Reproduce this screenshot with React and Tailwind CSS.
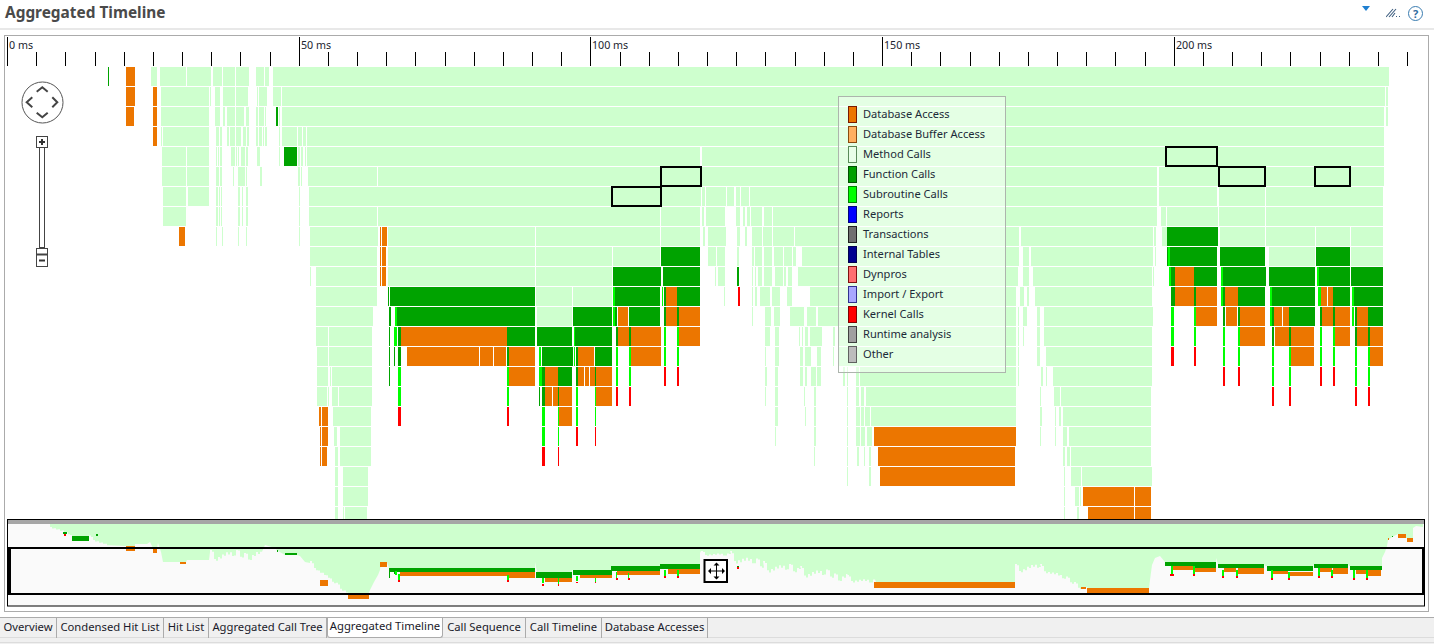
const COLORS = { l: "#ceffce", f: "#00a300", s: "#00ff00", o: "#ec7600", r: "#ff0000", b: "#ffb060" };

// one string per chart row, colour letter followed by x ranges in page pixels
const ROWS = [
  "f 108-109 o 126-135 l 151-153 153-157 160-186 187-211 213-222 223-235 236-249 256-258 258-264 265-269 273-1389",
  "o 126-135 153-157 l 161-209 210-211 215-220 223-235 236-248 257-258 259-263 263-267 273-281 282-1385 1386-1388",
  "o 126-134 153-157 l 161-209 215-220 223-225 227-235 236-244 246-249 256-258 259-264 265-266 f 276-278 l 279-280 282-1384 1386-1388",
  "o 153-157 l 161-162 163-209 216-219 220-222 227-229 230-235 236-241 243-246 247-249 256-258 259-262 263-264 265-267 279-280 282-297 298-302 303-306 307-1384",
  "l 162-186 187-209 216-217 218-219 220-222 231-235 236-237 238-239 241-245 246-248 257-260 279-280 f 284-297 l 298-300 301-303 305-306 307-700 702-1384",
  "l 162-186 187-209 216-219 220-222 233-234 238-243 243-245 246-247 260-262 298-300 301-302 308-377 378-700 702-1157 1159-1384",
  "l 163-186 188-209 216-218 219-220 221-222 238-240 242-243 246-248 299-300 309-701 702-705 706-726 727-734 736-740 741-749 750-1157 1159-1217 1219-1265 1266-1383",
  "l 163-186 216-218 219-220 221-222 238-240 242-243 246-248 299-300 309-377 378-660 661-700 702-704 706-725 736-740 743-745 747-750 751-762 764-772 773-1157 1161-1166 1167-1218 1219-1265 1266-1383",
  "o 179-185 l 216-217 222-223 238-239 246-247 299-300 310-378 o 380-381 382-387 l 388-535 536-660 661-700 703-705 708-726 737-740 745-747 752-762 763-772 773-794 795-1019 1021-1153 1154-1156 1162-1167 f 1167-1218 l 1220-1265 1266-1315 1316-1350 1351-1383",
  "l 310-377 o 380-381 382-386 l 388-535 536-612 613-660 f 661-700 l 708-716 717-725 737-739 752-754 755-762 764-772 774-783 784-792 793-796 802-1019 1023-1029 1031-1153 1155-1156 f 1167-1168 s 1168-1170 f 1170-1217 1220-1265 l 1269-1315 f 1316-1350 l 1351-1383",
  "l 310-311 316-377 o 380-381 382-386 l 388-535 536-612 f 613-661 663-700 l 715-716 718-725 f 737-739 l 752-753 755-756 758-762 764-772 775-783 784-786 788-792 798-1018 1023-1029 1033-1152 1153-1154 s 1169-1171 f 1171-1175 o 1175-1194 f 1194-1217 s 1221-1223 f 1223-1266 1269-1315 s 1317-1319 f 1319-1350 1351-1383",
  "l 316-377 f 388-389 390-535 l 536-572 573-612 s 613-615 f 615-660 s 662-663 f 664-666 o 666-677 f 677-700 l 724-725 r 738-740 l 752-753 755-757 760-770 772-780 787-792 810-1016 1020-1024 1027-1029 1035-1152 f 1171-1175 o 1175-1194 f 1194-1196 o 1196-1217 s 1221-1223 f 1223-1225 o 1225-1238 f 1238-1265 s 1270-1272 f 1272-1315 s 1318-1321 o 1321-1327 1328-1333 f 1333-1350 s 1352-1354 f 1354-1383",
  "l 316-373 f 389-391 s 395-397 f 397-535 l 537-572 f 573-612 s 613-615 f 615-617 o 618-628 f 629-660 664-666 o 666-677 f 677-679 o 679-700 l 752-753 765-771 774-780 790-804 807-816 818-1016 1018-1019 1023-1027 1037-1040 1044-1153 s 1171-1174 1194-1196 o 1196-1217 f 1223-1225 o 1226-1237 f 1238-1240 o 1240-1265 s 1270-1272 f 1272-1274 o 1274-1282 1283-1289 f 1289-1315 1320-1322 o 1322-1333 f 1333-1335 o 1335-1350 s 1352-1354 f 1355-1357 o 1357-1368 f 1368-1383",
  "l 316-328 329-372 f 389-390 s 394-397 f 398-401 o 401-507 f 507-535 537-572 s 574-575 f 575-612 616-618 o 618-629 f 629-631 o 631-661 s 664-666 677-679 o 679-700 l 765-770 775-779 799-800 802-803 805-808 810-822 833-835 839-1016 1018-1019 1023-1024 1037-1040 1044-1152 s 1171-1174 1194-1196 1223-1225 1238-1240 o 1240-1265 f 1272-1274 o 1275-1289 f 1289-1291 o 1291-1314 s 1320-1322 1333-1335 o 1335-1350 f 1355-1357 o 1357-1368 f 1368-1370 o 1370-1383",
  "l 317-328 329-372 f 389-390 394-395 398-401 o 407-479 480-493 494-506 f 507-509 o 509-535 s 539-541 f 542-573 s 574-575 f 576-578 o 578-594 f 595-612 s 616-618 629-631 o 631-661 s 664-666 677-679 l 765-766 775-779 800-803 805-807 807-811 817-821 833-834 838-1016 1018-1019 1037-1040 1046-1152 r 1171-1174 1194-1196 s 1223-1225 1238-1240 1272-1274 1289-1291 o 1291-1314 s 1320-1322 1333-1335 1355-1357 1368-1370 o 1370-1383",
  "l 317-328 330-331 332-372 f 389-390 s 398-401 507-509 o 509-535 s 539-542 f 542-545 o 545-558 f 558-572 576-578 o 578-584 585-589 590-595 f 595-596 o 596-612 s 616-618 629-631 r 664-666 677-679 l 765-767 775-778 800-803 805-807 811-816 817-821 843-845 847-848 856-859 860-1016 1018-1019 1041-1043 1046-1047 1053-1152 r 1223-1225 1238-1240 s 1272-1274 1289-1291 r 1320-1322 1333-1335 s 1355-1357 1368-1370",
  "l 317-327 328-329 332-338 339-372 s 398-401 507-509 f 539-540 542-545 o 545-552 553-558 f 558-559 o 559-572 s 576-578 595-596 o 596-612 r 616-618 629-631 l 765-766 775-778 804-805 814-816 847-848 856-859 861-864 866-1016 1040-1041 1054-1060 1061-1151 r 1272-1274 1289-1291 1355-1357 1368-1370",
  "o 319-321 322-328 l 333-371 r 398-401 507-509 s 542-545 558-559 o 559-572 s 576-578 595-596 l 775-778 805-806 814-816 847-848 856-860 861-864 865-870 871-1016 1040-1042 1055-1056 1059-1061 1063-1151",
  "o 320-321 322-328 l 334-337 340-371 s 542-545 558-559 r 576-578 595-596 l 775-776 814-816 847-848 856-860 861-865 867-872 o 874-1016 l 1040-1041 1055-1056 1063-1067 1069-1151",
  "o 320-321 322-327 l 335-338 340-371 r 542-545 558-559 l 814-815 847-848 857-859 864-865 869-871 o 878-1015 l 1063-1065 1067-1070 1071-1151",
  "l 335-338 343-368 847-848 869-871 o 880-1015 l 1064-1065 1071-1081 1082-1152",
  "l 335-338 343-368 1064-1065 1075-1079 1080-1081 o 1083-1134 1135-1151",
  "l 335-338 343-344 345-367 1064-1065 1077-1079 o 1088-1134 1135-1151",
];

const parseRow = (row) => {
  let color = "l";
  const out = [];
  row.split(" ").forEach((part) => {
    if (part.includes("-")) {
      const [a, b] = part.split("-").map(Number);
      out.push({ a, b, color });
    } else {
      color = part;
    }
  });
  return out;
};

const FRAMES = [
  [612, 187, 49, 19],
  [661, 167, 40, 19],
  [1166, 147, 51, 19],
  [1219, 167, 46, 19],
  [1315, 167, 35, 19],
];

const LEGEND = [
  ["Database Access", "bg-[#ec7600]", "border-[#7a1a00]"],
  ["Database Buffer Access", "bg-[#ffb060]", "border-[#8a4a10]"],
  ["Method Calls", "bg-[#e8ffe8]", "border-[#5a8a5a]"],
  ["Function Calls", "bg-[#00a000]", "border-[#005000]"],
  ["Subroutine Calls", "bg-[#00ff00]", "border-[#008000]"],
  ["Reports", "bg-[#0000ff]", "border-[#000080]"],
  ["Transactions", "bg-[#707070]", "border-[#202020]"],
  ["Internal Tables", "bg-[#000090]", "border-[#000050]"],
  ["Dynpros", "bg-[#ff7070]", "border-[#801010]"],
  ["Import / Export", "bg-[#a8a8ff]", "border-[#303090]"],
  ["Kernel Calls", "bg-[#ff0000]", "border-[#800000]"],
  ["Runtime analysis", "bg-[#a0a0a0]", "border-[#404040]"],
  ["Other", "bg-[#bcbcbc]", "border-[#606060]"],
];

const TABS = [
  ["Overview", "w-[57px]"],
  ["Condensed Hit List", "w-[107px]"],
  ["Hit List", "w-[45px]"],
  ["Aggregated Call Tree", "w-[118px]"],
  ["Aggregated Timeline", "w-[116px]", true],
  ["Call Sequence", "w-[83px]"],
  ["Call Timeline", "w-[76px]"],
  ["Database Accesses", "w-[106px]"],
];

const TICKS = Array.from({ length: 49 }, (_, i) => ({
  x: Math.round(7 + 29.17 * i),
  major: i % 10 === 0,
  label: i % 10 === 0 ? `${i * 5} ms` : null,
}));

// bottom edge of the green area in the overview strip
const jag = (from, to, amp) => {
  const pts = [];
  for (let x = from[0], i = 0; x < to[0]; x += 2, i++) {
    const t = (x - from[0]) / (to[0] - from[0]);
    const y = from[1] + (to[1] - from[1]) * t;
    const n = (((i * i * 13 + i * 5) % 17) - 8) / 8 + Math.sin(i * 0.45) * 0.5;
    pts.push([x, y + n * amp], [x + 2, y + n * amp]);
  }
  return pts;
};

const CONTOUR = [
  ...jag([46, 524], [72, 536], 1.5),
  [72, 541], [89, 541], [89, 537],
  ...jag([89, 537], [108, 546], 1.5),
  [125, 546], [135, 546], [135, 544], [147, 544], [150, 542], [153, 548], [157, 548], [158, 543], [161, 552], [163, 562],
  [186, 562], [187, 560], [209, 560], [210, 552],
  ...jag([210, 555], [262, 556], 5),
  [265, 545], [275, 548], [278, 551], [285, 555], [297, 555], [300, 556], [305, 562], [310, 563],
  ...jag([310, 563], [348, 595], 2),
  [348, 595], [368, 595], [370, 590], [374, 582], [378, 575], [380, 570], [381, 562], [387, 562], [389, 568],
  [535, 568], [535, 562], [537, 572], [572, 572], [572, 570], [611, 570], [611, 566], [660, 566], [660, 564], [700, 564], [700, 553],
  ...jag([701, 553], [730, 556], 2),
  ...jag([730, 556], [763, 566], 5),
  ...jag([763, 566], [800, 571], 5),
  ...jag([800, 571], [847, 578], 5),
  ...jag([847, 578], [874, 583], 3),
  [876, 582], [1015, 582],
  ...jag([1015, 568], [1040, 567], 4),
  ...jag([1040, 567], [1087, 590], 3),
  [1087, 588], [1149, 588], [1150, 580], [1152, 565], [1155, 558], [1160, 556], [1165, 562],
  [1216, 562], [1216, 558], [1218, 564], [1264, 564], [1265, 566], [1313, 566], [1314, 564], [1348, 564], [1349, 566],
  [1382, 566], [1382, 558], [1385, 552], [1387, 546], [1388, 540], [1392, 537], [1398, 534], [1406, 534], [1406, 538], [1413, 538], [1413, 528], [1416, 526], [1423, 527], [1423, 524],
];

// x0, x1, y0, y1, colour
const OVERVIEW_BARS = [
  [72, 89, 536, 541, "f"], [63, 67, 532, 534, "f"], [64, 66, 534, 536, "r"], [96, 98, 534, 536, "f"],
  [126, 135, 546, 551, "o"], [153, 157, 548, 553, "o"], [180, 186, 562, 564, "o"], [277, 278, 550, 552, "f"], [285, 297, 553, 555, "f"],
  [320, 328, 580, 586, "o"], [348, 369, 595, 599, "o"], [380, 387, 562, 567, "o"],
  [389, 535, 568, 572, "f"], [400, 507, 572, 576, "o"], [507, 535, 572, 578, "o"], [389, 390, 572, 578, "f"], [394, 396, 572, 574, "f"], [395, 397, 571, 575, "s"], [398, 400, 574, 580, "s"], [398, 400, 580, 582, "r"],
  [536, 572, 572, 578, "f"], [545, 572, 578, 582, "o"], [573, 612, 570, 575, "f"], [580, 612, 575, 578, "o"],
  [611, 660, 566, 571, "f"], [617, 660, 571, 575, "o"], [660, 700, 564, 569, "f"], [668, 700, 569, 574, "o"],
  [507, 509, 575, 580, "s"], [507, 509, 580, 582, "r"], [542, 544, 578, 583, "s"], [542, 544, 584, 586, "r"], [558, 559, 578, 584, "s"], [558, 559, 584, 586, "r"],
  [576, 578, 576, 581, "s"], [576, 578, 582, 583, "r"], [595, 596, 578, 582, "s"], [595, 596, 582, 583, "r"], [616, 617, 572, 578, "s"], [616, 618, 578, 580, "r"], [628, 629, 573, 578, "s"], [628, 630, 578, 580, "r"],
  [664, 666, 570, 576, "s"], [664, 666, 576, 578, "r"], [677, 679, 570, 576, "s"], [677, 679, 576, 578, "r"], [737, 739, 566, 567, "f"], [737, 739, 567, 569, "r"],
  [874, 1015, 582, 588, "o"], [1087, 1149, 588, 593, "o"], [1081, 1086, 587, 589, "o"],
  [1165, 1216, 562, 566, "f"], [1173, 1195, 566, 570, "o"], [1195, 1216, 568, 572, "o"], [1195, 1216, 566, 568, "f"],
  [1218, 1264, 564, 568, "f"], [1224, 1236, 568, 572, "o"], [1238, 1264, 568, 574, "o"],
  [1267, 1313, 566, 571, "f"], [1273, 1288, 571, 574, "o"], [1289, 1313, 572, 576, "o"],
  [1314, 1348, 564, 568, "f"], [1320, 1332, 568, 572, "o"], [1333, 1348, 568, 574, "o"],
  [1350, 1382, 566, 570, "f"], [1356, 1367, 570, 574, "o"], [1368, 1381, 570, 576, "o"],
  [1171, 1173, 566, 574, "s"], [1170, 1174, 574, 576, "r"], [1193, 1195, 566, 574, "s"], [1193, 1195, 574, 576, "r"],
  [1222, 1224, 570, 576, "s"], [1222, 1224, 576, 578, "r"], [1236, 1238, 570, 576, "s"], [1236, 1238, 576, 578, "r"],
  [1271, 1273, 570, 578, "s"], [1271, 1273, 578, 580, "r"], [1288, 1290, 572, 578, "s"], [1288, 1290, 578, 580, "r"],
  [1318, 1320, 568, 576, "s"], [1318, 1320, 576, 578, "r"], [1331, 1333, 570, 576, "s"], [1331, 1333, 576, 578, "r"],
  [1353, 1355, 570, 578, "s"], [1353, 1355, 578, 580, "r"], [1366, 1368, 570, 578, "s"], [1366, 1368, 578, 580, "r"],
  [1398, 1406, 534, 538, "o"], [1407, 1413, 538, 542, "o"], [1388, 1389, 538, 540, "o"], [1392, 1393, 536, 537, "f"],
];

const Chart = () => (
  <svg width="1423" height="483" viewBox="5 36 1423 483" className="block">
    <rect x="5" y="36" width="1423" height="483" fill="#ffffff" />
    {TICKS.map((t) => (
      <g key={t.x}>
        <line x1={t.x + 0.5} x2={t.x + 0.5} y1={t.major ? 37 : 52} y2="66" stroke="#000" />
        {t.label && (
          <text x={t.x + 2} y="49" fontSize="10.7" fill="#1c2430" fontFamily="'Noto Sans', sans-serif">
            {t.label}
          </text>
        )}
      </g>
    ))}
    {ROWS.map((row, i) =>
      parseRow(row).map((s) => (
        <rect key={`${i}-${s.a}`} x={s.a} y={67 + i * 20} width={s.b - s.a} height="19" fill={COLORS[s.color]} />
      ))
    )}
    {FRAMES.map(([x, y, w, h]) => (
      <rect key={x} x={x} y={y} width={w} height={h} fill="none" stroke="#000" strokeWidth="2" />
    ))}
  </svg>
);

const Overview = () => (
  <svg width="1418" height="88" viewBox="7 519 1418 88" className="block ml-[2px]">
    <rect x="7.5" y="519.5" width="1417" height="86.5" fill="#fafafa" stroke="#000" />
    <polygon points={CONTOUR.map((p) => p.join(",")).join(" ")} fill={COLORS.l} />
    {OVERVIEW_BARS.map(([a, b, y0, y1, c]) => (
      <rect key={`${a}-${y0}-${c}`} x={a} y={y0} width={b - a} height={y1 - y0} fill={COLORS[c]} />
    ))}
    <rect x="8" y="520" width="1416" height="4" fill="#a6a6a6" />
    <rect x="9.5" y="548" width="1413.5" height="46" fill="none" stroke="#000" strokeWidth="2" />
    <rect x="8" y="547" width="3" height="48" fill="#000" />
    <rect x="704.5" y="560" width="22.5" height="22" fill="#fff" stroke="#000" strokeWidth="2" />
    <path d="M716.5 564v14M709.5 571h14" stroke="#000" strokeWidth="1" fill="none" />
    <path d="M716.5 562.5l-3 3h6zM716.5 579.5l-3-3h6zM708 571l3-3v6zM725 571l-3-3v6z" fill="#000" />
  </svg>
);

// pan circle and zoom slider sitting on top of the chart
const NavControl = () => (
  <svg width="46" height="192" viewBox="0 0 46 192" className="absolute left-[15px] top-[44px]">
    <circle cx="22.5" cy="22.5" r="20.5" fill="#fff" stroke="#555" strokeWidth="1" />
    <path d="M16.7 11.7l5.6-4.4 5.4 4.4M16.7 32.7l5.6 4.6 5.4-4.6M12.3 17.3l-5.6 5 5.6 5M32.3 17.3l5 5-5 5" fill="none" stroke="#444" strokeWidth="2" />
    <rect x="16.5" y="56.5" width="11" height="11" fill="#fff" stroke="#444" />
    <path d="M19 62h6M22 59v6" stroke="#333" strokeWidth="2" />
    <rect x="19.5" y="67.5" width="5" height="100" fill="#fff" stroke="#444" />
    <rect x="16.5" y="168.5" width="11" height="18" fill="#fff" stroke="#444" />
    <path d="M17 174.5h10" stroke="#444" strokeWidth="2" />
    <path d="M19 180.5h6" stroke="#333" strokeWidth="2" />
  </svg>
);

const Legend = () => (
  <div className="absolute left-[833px] top-[60px] w-[168px] h-[277px] border border-[#adb5ad] bg-white/45 pl-[9px] pt-[7px] flex flex-col">
    {LEGEND.map(([label, bg, border]) => (
      <div key={label} className="flex items-center h-[20px] shrink-0">
        <span className={`w-[9px] h-[17px] border ${bg} ${border}`}></span>
        <span className="ml-[6px] text-[11.1px] text-[#1c2a38] leading-none">{label}</span>
      </div>
    ))}
  </div>
);

const App = () => {
  return (
    <div className="w-[1434px] h-[644px] bg-white overflow-hidden flex flex-col font-['Noto_Sans',sans-serif]">
      {/* Header */}
      <div className="h-[30px] shrink-0 border-b-2 border-[#e8e8e8] flex items-center pl-[5px] pr-[11px]">
        <h1 className="text-[15.4px] font-bold text-[#4a4a4a] leading-none pb-[3px]">Aggregated Timeline</h1>
        <div className="ml-auto flex items-center pb-[2px]">
          <svg width="10" height="6" viewBox="0 0 10 6" className="mb-[8px]">
            <path d="M1 0h8L5 5z" fill="#1f7fd0" />
          </svg>
          <svg width="16" height="10" viewBox="0 0 16 10" className="ml-[15px]">
            <path d="M0 9l7-8M3 9l7-8M6 9l3-4" stroke="#3f5f80" strokeWidth="1.1" fill="none" />
            <path d="M10 8.5h1M13 8.5h1" stroke="#3f5f80" strokeWidth="1" />
          </svg>
          <span className="ml-[6px] w-[15px] h-[15px] rounded-full border-[1.5px] border-[#3a7cb0] text-[#2f6c9f] text-[11px] font-bold leading-none flex items-center justify-center">?</span>
        </div>
      </div>

      {/* Timeline panel */}
      <div className="mt-[5px] ml-[4px] w-[1425px] h-[577px] shrink-0 border border-[#ababab]">
        <div className="relative">
          <Chart />
          <NavControl />
          <Legend />
        </div>
        <Overview />
      </div>

      {/* Tabs */}
      <div className="mt-[5px] h-[21px] shrink-0 bg-[#f0f0f0] border-t border-[#ababab] border-b border-b-[#dcdcdc] flex">
        {TABS.map(([label, width, active]) => (
          <div
            key={label}
            className={`${width} h-[20px] shrink-0 flex items-center justify-center pb-[2px] text-[11.25px] text-[#1a1a2a] whitespace-nowrap border-r border-[#ababab] ${
              active ? "bg-white rounded-b-[3px] border-l border-b" : ""
            }`}
          >
            {label}
          </div>
        ))}
      </div>
      <div className="h-[4px] shrink-0 bg-[#f0f0f0]"></div>
      <div className="flex-1 bg-[#f0f0f0] border-t border-[#dcdcdc]"></div>
    </div>
  );
};

export default App;
